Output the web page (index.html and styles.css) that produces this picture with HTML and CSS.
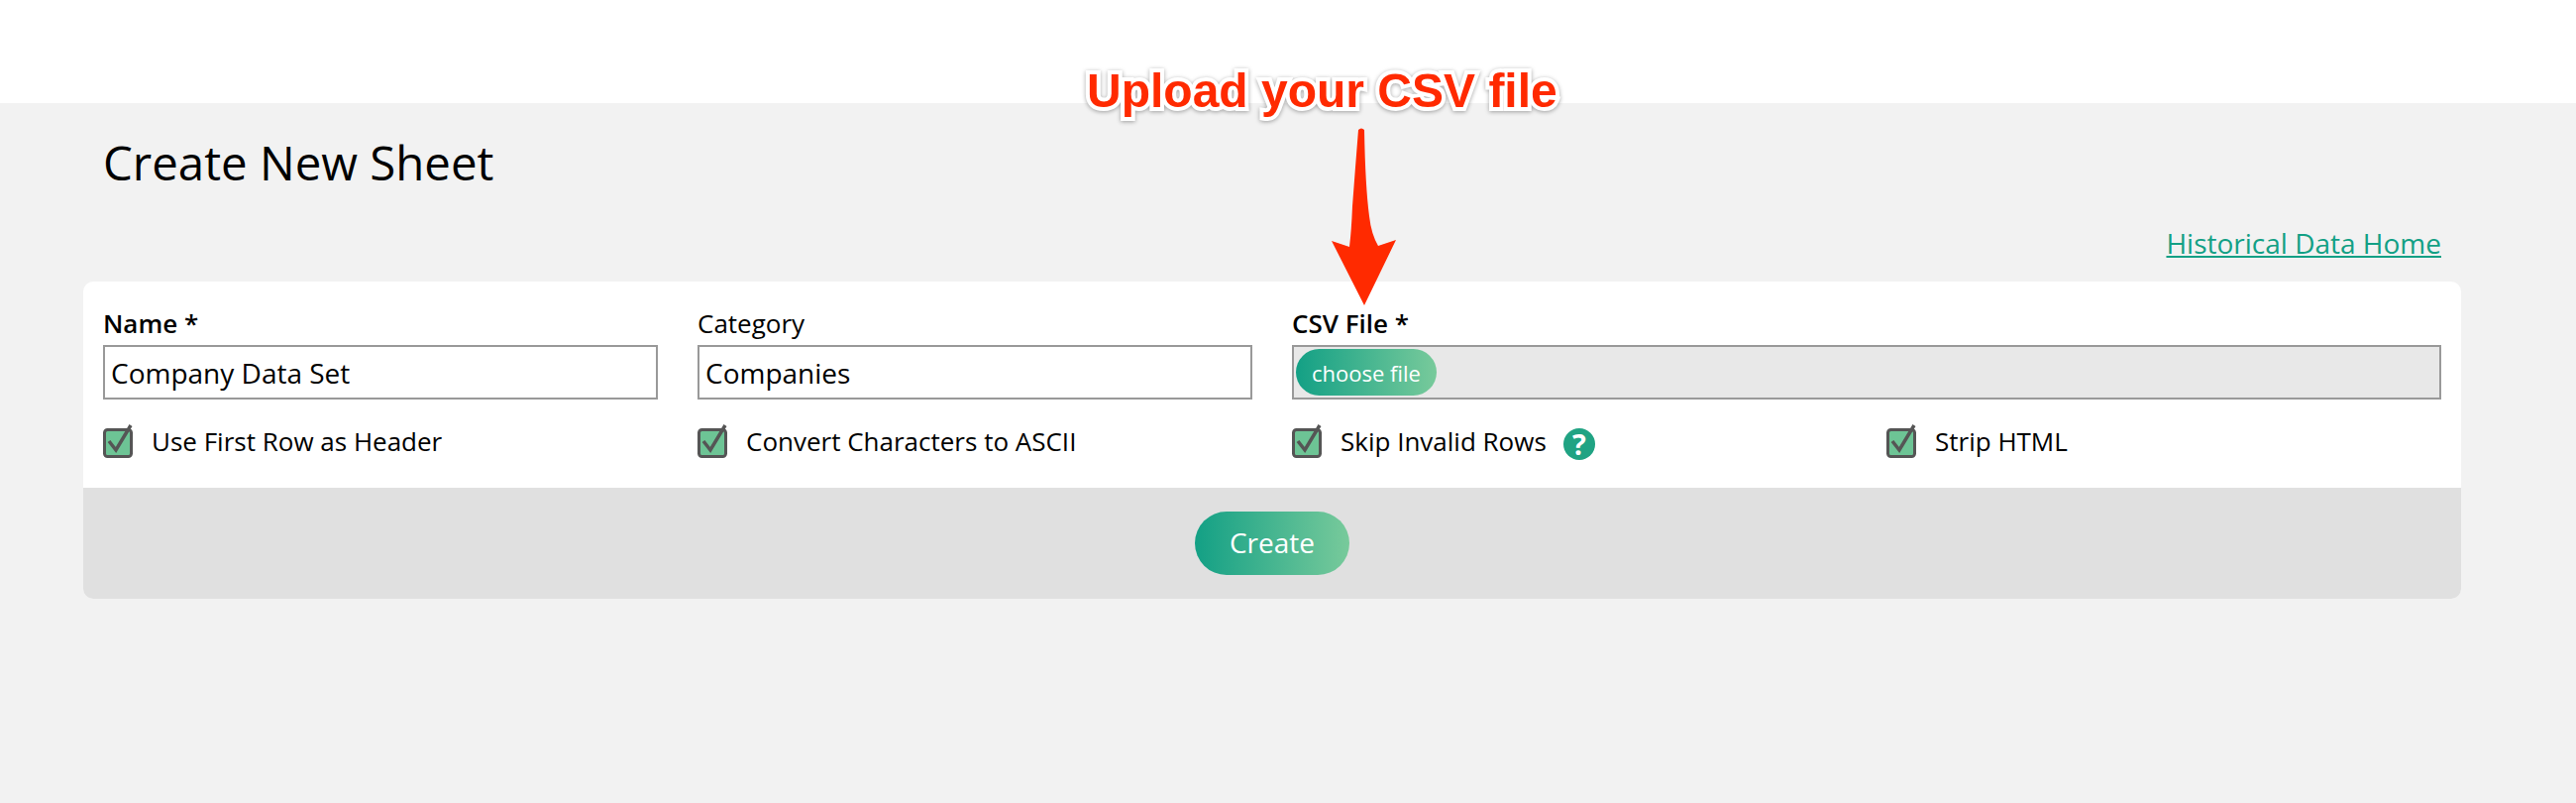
FILE: index.html
```html
<!DOCTYPE html>
<html lang="en">
<head>
    <meta charset="UTF-8">
    <title>Create New Sheet</title>
    <link rel="stylesheet" href="styles.css">
</head>
<body>
    <div class="top-bar"></div>

    <main class="content">
        <h1>Create New Sheet</h1>
        <div class="links"><a href="#">Historical Data Home</a></div>

        <form class="panel">
            <div class="fields">
                <div class="field">
                    <label class="req">Name *</label>
                    <input class="text-input" type="text" value="Company Data Set">
                </div>
                <div class="field">
                    <label>Category</label>
                    <input class="text-input" type="text" value="Companies">
                </div>
                <div class="field wide">
                    <label class="req">CSV File *</label>
                    <div class="file-input"><button type="button" class="choose-btn">choose file</button></div>
                </div>

                <div class="check">
                    <svg class="tick" width="32" height="34" viewBox="0 0 32 34"><rect x="1.5" y="5.5" width="27" height="27" rx="3" class="tick-box"/><path d="M6 17 L13 26 L28 1" class="tick-mark"/></svg>
                    <span>Use First Row as Header</span>
                </div>
                <div class="check">
                    <svg class="tick" width="32" height="34" viewBox="0 0 32 34"><rect x="1.5" y="5.5" width="27" height="27" rx="3" class="tick-box"/><path d="M6 17 L13 26 L28 1" class="tick-mark"/></svg>
                    <span>Convert Characters to ASCII</span>
                </div>
                <div class="check">
                    <svg class="tick" width="32" height="34" viewBox="0 0 32 34"><rect x="1.5" y="5.5" width="27" height="27" rx="3" class="tick-box"/><path d="M6 17 L13 26 L28 1" class="tick-mark"/></svg>
                    <span>Skip Invalid Rows</span>
                    <span class="help">?</span>
                </div>
                <div class="check">
                    <svg class="tick" width="32" height="34" viewBox="0 0 32 34"><rect x="1.5" y="5.5" width="27" height="27" rx="3" class="tick-box"/><path d="M6 17 L13 26 L28 1" class="tick-mark"/></svg>
                    <span>Strip HTML</span>
                </div>
            </div>

            <div class="panel-footer">
                <button type="button" class="create-btn">Create</button>
            </div>
        </form>
    </main>

    <!-- screenshot annotation drawn over the page -->
    <div class="callout">Upload your CSV file</div>
    <svg class="callout-arrow" width="70" height="184" viewBox="0 0 70 184">
        <path d="M27 3 Q30 0 33 3 Q34 60 38 90 Q40 108 47 120 L65 114 L33 180 L0 115 L18 121 Q20 105 21 80 Q24 40 27 3 Z"/>
    </svg>
</body>
</html>
```

FILE: styles.css
```css
* {
    margin: 0;
    padding: 0;
    box-sizing: border-box;
}

html, body {
    height: 810px;
    overflow: hidden;
}

body {
    font-family: "Open Sans", sans-serif;
    background: #fff;
    color: #000;
    position: relative;
}

.top-bar {
    height: 104px;
    background: #fff;
}

.content {
    height: 706px;
    background: #f2f2f2;
    padding: 0 116px 0 84px;
}

h1 {
    font-size: 47.4px;
    font-weight: 400;
    line-height: 64px;
    padding: 28px 0 0 20px;
}

.links {
    text-align: right;
    margin-top: 30px;
    height: 58px;
    padding-right: 20px;
    font-size: 28px;
    line-height: 38px;
}

.links a {
    color: #13a085;
}

.panel {
    border-radius: 10px;
    background: #fff;
    overflow: hidden;
}

.fields {
    display: grid;
    grid-template-columns: repeat(4, 560px);
    column-gap: 40px;
    padding: 24px 20px 0;
    height: 208px;
    align-content: start;
}

.field {
    display: flex;
    flex-direction: column;
}

.field.wide {
    grid-column: span 2;
}

.field label {
    font-size: 26px;
    line-height: 36px;
    height: 40px;
}

.field label.req {
    font-weight: 600;
}

.text-input {
    height: 55px;
    border: 2px solid #999;
    background: #fff;
    padding: 0 6px;
    font-family: inherit;
    font-size: 28px;
    color: #000;
    border-radius: 0;
    outline: none;
}

.file-input {
    height: 55px;
    border: 2px solid #999;
    background: #e8e8e8;
    padding: 2px;
}

.choose-btn, .create-btn {
    border: none;
    border-radius: 32px;
    color: #fff;
    font-family: inherit;
    font-weight: 500;
    background: linear-gradient(90deg, #13a085, #78ca9b);
}

.choose-btn {
    width: 142px;
    height: 47px;
    font-size: 22px;
    display: block;
}

.check {
    display: flex;
    align-items: center;
    margin-top: 23px;
    height: 38px;
    font-size: 26px;
}

.tick {
    margin-right: 17px;
    flex: none;
    overflow: visible;
}

.tick-box {
    fill: #6dc495;
    stroke: #555;
    stroke-width: 3;
}

.tick-mark {
    fill: none;
    stroke: #555;
    stroke-width: 3.5;
}

.help {
    width: 32px;
    height: 32px;
    margin: 6px 0 0 17px;
    border-radius: 50%;
    background: #20a383;
    color: #fff;
    font-weight: 700;
    font-size: 29px;
    line-height: 32px;
    text-align: center;
}

.panel-footer {
    height: 112px;
    background: #e0e0e0;
    display: flex;
    align-items: center;
    justify-content: center;
}

.create-btn {
    width: 156px;
    height: 64px;
    padding-bottom: 2px;
    font-size: 28px;
}

.callout {
    position: absolute;
    left: 1097px;
    top: 62px;
    font-family: "Liberation Sans", Arial, sans-serif;
    font-weight: 700;
    font-size: 48px;
    line-height: 60px;
    white-space: nowrap;
    color: #ff2a00;
    -webkit-text-stroke: 8px #fff;
    paint-order: stroke fill;
    filter: drop-shadow(0 1px 2px rgba(0, 0, 0, 0.35));
}

.callout-arrow {
    position: absolute;
    left: 1344px;
    top: 128px;
    fill: #ff2a00;
}
```
